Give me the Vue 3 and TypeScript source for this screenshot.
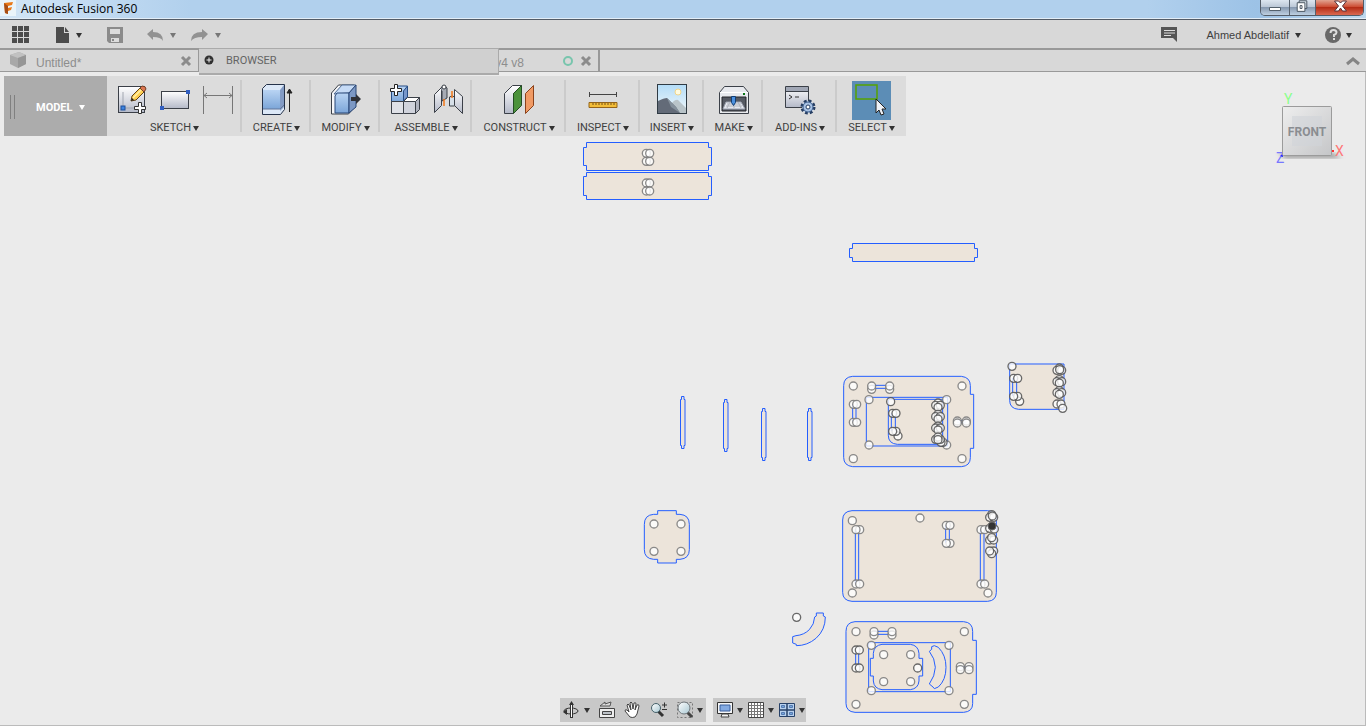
<script setup lang="ts">
type Point = [number, number]
interface Part { x: number; y: number; outline: string; lines?: string; holes: Point[]; dark?: Point[] }
interface Group { label: string; width: number; icons: string[]; active?: boolean }

const ink = '#3b4048'
const defs = `
<linearGradient id="metal" x1="0" y1="0" x2="0" y2="1"><stop offset="0" stop-color="#fff"/><stop offset="1" stop-color="#b4b9c8"/></linearGradient>
<linearGradient id="blue" x1="0" y1="0" x2="0" y2="1"><stop offset="0" stop-color="#b9d4f3"/><stop offset="1" stop-color="#7ba5d8"/></linearGradient>
<linearGradient id="sky" x1="0" y1="0" x2="0" y2="1"><stop offset="0" stop-color="#b3dcf7"/><stop offset="1" stop-color="#f2f8fa"/></linearGradient>
<linearGradient id="lens" x1="0" y1="0" x2="1" y2="1"><stop offset="0" stop-color="#fff"/><stop offset="1" stop-color="#a9c8d3"/></linearGradient>`

const icons: Record<string, string> = {
  sketch: `<rect x="2.5" y="2.5" width="26" height="26" fill="url(#metal)" stroke="${ink}"/><path d="M7 8v16h17" fill="none" stroke="#a1a6b0"/><rect x="5" y="22" width="4" height="4" fill="#3d84e0" stroke="#1d4f9c"/><path d="M15 17l1-5 8-8 4 4-8 8z" fill="#ffd052" stroke="#604018"/><path d="M17 14l8-8" stroke="#fff0a8" stroke-width="1.500"/><path d="M24 4l2-2q4 0 4 3l-2 3z" fill="#dc7650" stroke="#704028"/><path d="M15 17l3-1-2-2z" fill="#222"/><path d="M22.500 18.500h3v4h4v3h-4v4h-3v-4h-4v-3h4z" fill="#fff" stroke="#333"/>`,
  rectangle: `<rect x="2.500" y="7.500" width="27" height="17" fill="url(#metal)" stroke="${ink}"/><rect x="1" y="22" width="4" height="4" fill="#315fc2"/><rect x="27" y="6" width="4" height="4" fill="#315fc2"/>`,
  dimension: `<path d="M1.500 2v28M30.500 2v28M2 11.500h28M5 9l-3 2.500L5 14M27 9l3 2.500-3 2.500" fill="none" stroke="#777"/>`,
  extrude: `<path d="M1.500 4.500l4-4h18v25l-4 5h-18z" fill="#dce8f7" stroke="#26334a"/><path d="M2 6h17v19H2z" fill="url(#blue)"/><path d="M19 6l4-5v22l-4 4z" fill="#839bc4"/><path d="M2 25h17l4-4" fill="none" stroke="#64779a"/><path d="M28.500 28V6M26 9l2.500-4L31 9z" fill="#222" stroke="#222"/>`,
  modify: `<path d="M1.500 9l7-8h16v22l-6 7h-17z" fill="#f6f7fa" stroke="${ink}"/><path d="M4 10l8-9h14l-7 8z" fill="#c6dbf6" stroke="#4f6a91"/><path d="M7 9h12v20H5V12z" fill="url(#blue)" stroke="#294777"/><path d="M19 9l7-8v22l-7 6z" fill="#7c98c4" stroke="#294777"/><path d="M21 13h5v-3l5 5-5 5v-3h-5z" fill="#303238"/>`,
  component: `<path d="M2.500 7l5-5h11v11l-4 5h-12z" fill="url(#blue)" stroke="#264d85"/><path d="M14.500 7l4-5v11l-4 4z" fill="#7797cb" stroke="#264d85"/><path d="M2.500 17.500h12v12h-12z" fill="#dfe1e7" stroke="${ink}"/><path d="M14.500 17.500l4-4h12l-4 4z" fill="#fff" stroke="${ink}"/><path d="M14.500 17.500h12v12h-12z" fill="#d0d3dc" stroke="${ink}"/><path d="M26.500 17.500l4-4v12l-4 4z" fill="#afb3bf" stroke="${ink}"/><path d="M5.500 0.500h3v4h4v3h-4v4h-3v-4h-4v-3h4z" fill="#fff" stroke="#222"/>`,
  joint: `<path d="M2.500 10.500l7-7v18l-7 7z" fill="url(#metal)" stroke="${ink}"/><path d="M9 4q2-4 6 0v10l-5 3V7" fill="#a6abb4" stroke="${ink}"/><circle cx="12" cy="3" r="2" fill="#fff" stroke="${ink}"/><path d="M17.500 13q3-2 5 0v9h-5z" fill="#d6dfe8" stroke="${ink}"/><path d="M22.500 5.500l8 7v17l-8-8z" fill="url(#metal)" stroke="${ink}"/><path d="M20 7v7M12 15v7" stroke="#f47818" stroke-width="1.500"/>`,
  construct: `<path d="M1.500 9.500l8-8h9l-8 8v20h-9z" fill="url(#metal)" stroke="${ink}"/><path d="M10.500 9.500l8-8v20l-8 8z" fill="#4b923b" stroke="#244e23"/><path d="M22.500 9.500l8-8v20l-8 8z" fill="#f09a64" stroke="#8a421c"/>`,
  measure: `<path d="M2 10.500h28M2.500 8v5M29.500 8v5" stroke="#444"/><path d="M2 18.500h28v5H2z" fill="#f3bd38" stroke="#956419"/><path d="M6 19v2m3-2v2m3-2v2m3-2v2m3-2v2m3-2v2m3-2v2m3-2v2" stroke="#755017"/>`,
  insert: `<rect x="1.500" y="0.500" width="29" height="29" fill="url(#sky)" stroke="#303b44"/><path d="M14 21q5-6 8-5l8 8v5H14z" fill="#b9c4c9"/><path d="M2 17q6-3 9-3l9 9 4 6H2z" fill="#636b78"/><path d="M11 14l9 9 4 6-9-6z" fill="#84909b"/><circle cx="22" cy="8" r="3" fill="#fffbe0" stroke="#f1d58a"/>`,
  make: `<path d="M1.500 8.500l5-6h19l5 6v21h-29z" fill="#e8eaee" stroke="${ink}"/><path d="M2 8.500h28" stroke="#fff"/><path d="M4 13h24v14H4z" fill="#555962" stroke="#25272b"/><path d="M8 18h15l4 7H5z" fill="#e5e8ef" stroke="#999fac"/><path d="M9 20h14M8 22h16M12 18l-3 6m7-6v6m4-6l3 6" stroke="#afb3bc"/><path d="M13.500 12.500h4v6l-2 3-2-3z" fill="#4a90df" stroke="#123e75"/><path d="M25 9h2v2h-2z" fill="#087516"/>`,
  addins: `<path d="M1.500 2.500h23v21h-23z" fill="url(#metal)" stroke="${ink}"/><path d="M2 3h22v4H2z" fill="#a1a7b5"/><path d="M2 7.500h22" stroke="${ink}"/><path d="M5 11l3 2-3 2m6-2h4" fill="none" stroke="#333"/><circle cx="24" cy="23" r="6" fill="#c4d6ef" stroke="#263e63" stroke-width="3" stroke-dasharray="2.700 2"/><circle cx="24" cy="23" r="5" fill="#a9c3e5" stroke="#3c5d8b"/><circle cx="24" cy="23" r="2" fill="#fff" stroke="#263e63"/>`,
  select: `<rect x="1" y="1" width="21" height="14" fill="none" stroke="#56a300" stroke-width="1.500"/><path d="M21 15v14l3-3 2 5 3-1-2-5h4z" fill="#eef1f6" stroke="#222"/>`
}

const groups: Group[] = [
  { label: 'SKETCH', width: 135, icons: ['sketch', 'rectangle', 'dimension'] },
  { label: 'CREATE', width: 69, icons: ['extrude'] },
  { label: 'MODIFY', width: 69, icons: ['modify'] },
  { label: 'ASSEMBLE', width: 92, icons: ['component', 'joint'] },
  { label: 'CONSTRUCT', width: 94, icons: ['construct'] },
  { label: 'INSPECT', width: 74, icons: ['measure'] },
  { label: 'INSERT', width: 64, icons: ['insert'] },
  { label: 'MAKE', width: 59, icons: ['make'] },
  { label: 'ADD-INS', width: 74, icons: ['addins'] },
  { label: 'SELECT', width: 69, icons: ['select'], active: true }
]

const navSets = [
  [
    { name: 'Orbit', menu: true, art: `<ellipse cx="8" cy="10" rx="7" ry="3" fill="none" stroke="#333"/><path d="M8.500 2v15" stroke="#333" stroke-width="3"/><path d="M8.500 3v13" stroke="#fff"/><path d="M6 4l2.500-4L11 4zM4 8v6l-4-3z" fill="#333"/>` },
    { name: 'Look at', menu: false, art: `<path d="M1.500 7.500h15v9h-15z" fill="#eee" stroke="#444"/><path d="M4.500 10.500h9v3h-9z" fill="#bcc1c7" stroke="#444"/><path d="M2 5l5-4v2l6-2-1 4z" fill="#ddd" stroke="#555"/>` },
    { name: 'Pan', menu: false, art: `<path d="M6 16L1 10q0-2 2-1l2 2-2-7q1-2 2 0l2 5-1-7q1-2 2 0l1 6 1-6q2-1 2 1l-1 6 2-5q2-1 2 1l-2 8-2 3q-3 1-5 0z" fill="#fff" stroke="#444"/>` },
    { name: 'Zoom', menu: false, art: `<path d="M8 10l5 5" stroke="#333" stroke-width="3"/><circle cx="6" cy="7" r="4.500" fill="url(#lens)" stroke="#46616a"/><path d="M12 4h5m-2.500-2.500v5M12 8.500h5" stroke="#333"/>` },
    { name: 'Fit', menu: true, art: `<path d="M1.500 1.500h15v15h-15z" fill="none" stroke="#777" stroke-dasharray="2 2"/><path d="M11 11l5 5" stroke="#444" stroke-width="3"/><circle cx="8" cy="7" r="6" fill="url(#lens)" stroke="#70777c"/>` }
  ],
  [
    { name: 'Display settings', menu: true, art: `<path d="M1.500 1.500h15v11h-15z" fill="#f4f5f6" stroke="#333"/><path d="M4 4h10v6H4z" fill="#83aae2" stroke="#395f9e"/><path d="M6 13h6l1 3H5z" fill="#eee" stroke="#444"/>` },
    { name: 'Grid and snaps', menu: true, art: `<path d="M1.500 1.500h15v15h-15z" fill="#fff" stroke="#444"/><path d="M4.500 2v14m3-14v14m3-14v14m3-14v14M2 4.500h14m-14 3h14m-14 3h14m-14 3h14" stroke="#777"/>` },
    { name: 'Viewports', menu: true, art: `<path d="M1.500 2.500h15v13h-15z" fill="#b8d1ee" stroke="#274168"/><path d="M9 2v14M1 9h15" stroke="#274168" stroke-width="1.500"/><path d="M3.500 4.500h3v2h-3zm8 0h3v2h-3zm-8 7h3v2h-3zm8 0h3v2h-3z" fill="#78a5dc" stroke="#547bb0"/>` }
  ]
]

const simpleParts = [
  'M586.500 142.500H708.500V147.500H711.500V165.500H708.500V170.500H586.500V165.500H583.500V147.500H586.500Z',
  'M586.500 172.500H708.500V176.500H711.500V195.500H708.500V199.500H586.500V195.500H583.500V176.500H586.500Z',
  'M852.500 243.500H974.500V248.500H977.500V257.500H974.500V261.500H852.500V257.500H849.500V248.500H852.500Z',
  ...[[680, 396], [723, 399], [761, 408], [807, 408]].map(([x, y]) => `M${x + 1.5} ${y + .5}h2.500v3h1v46h-1v3h-2.500v-3h-1v-46h1z`)
]

// Outline and hole coordinates are in thirds of a canvas pixel, relative to each part's origin.
const parts: Part[] = [
  { x: 630, y: 70, outline: '', holes: [[48, 249], [58, 249], [48, 273], [58, 273], [48, 338], [58, 338], [48, 362], [58, 362]] },
  { x: 630, y: 385, outline: 'M83 388V377H139V388H150Q178 390 178 418V494Q178 521 150 523H139V534H83V523H71Q43 521 43 494V418Q43 390 71 388Z', holes: [[71, 416], [152, 416], [71, 498], [152, 498]] },
  {
    x: 830, y: 360, outline: 'M68 49H394Q421 52 421 77V103H431V265H421V293Q421 318 394 320H68Q41 317 41 292V77Q41 51 68 49Z',
    lines: 'M109 112H353V258H109ZM175 118H338V253H202Q175 251 175 226ZM124 76H178M124 85H178M68 132V186M78 132V186M184 159V213M196 159V213M381 182H408M381 188H408',
    holes: [[69, 77], [395, 77], [69, 295], [395, 295], [124, 87], [178, 87], [124, 77], [178, 77], [69, 132], [79, 132], [69, 186], [79, 186], [116, 118], [349, 118], [116, 254], [349, 254], [381, 182], [408, 182], [381, 188], [408, 188]],
    dark: [[181, 124], [187, 159], [197, 159], [203, 227], [197, 213], [187, 213], [323, 128], [316, 135], [330, 135], [323, 141], [323, 162], [316, 169], [330, 169], [323, 176], [323, 197], [316, 203], [330, 203], [323, 209], [338, 246], [332, 246], [316, 237], [330, 237], [323, 230], [323, 238]]
  },
  {
    x: 990, y: 350, outline: 'M59 42H222V178H86Q59 176 59 151Z', lines: 'M68 84V138M80 84V138', holes: [],
    dark: [[65, 48], [70, 84], [82, 84], [88, 153], [82, 138], [70, 138], [207, 53], [200, 60], [214, 60], [208, 58], [207, 88], [200, 94], [214, 94], [207, 98], [207, 121], [200, 127], [214, 127], [207, 132], [200, 161], [212, 161], [217, 174]]
  },
  {
    x: 830, y: 500, outline: 'M66 32H473Q499 34 499 60V277Q499 302 473 304H66Q38 302 38 277V60Q38 34 66 32Z',
    lines: 'M76 88V251M86 88V251M347 75V129M358 75V129M451 88V251M462 88V251',
    holes: [[66, 61], [66, 278], [473, 278], [269, 53], [88, 88], [77, 88], [77, 251], [88, 251], [348, 75], [359, 75], [359, 129], [348, 129], [452, 88], [463, 88], [452, 251], [463, 251]],
    dark: [[484, 43], [478, 51], [490, 51], [486, 47], [478, 84], [492, 86], [478, 119], [490, 119], [484, 112], [490, 152], [484, 160], [478, 152]]
  },
  {
    x: 780, y: 605, outline: 'M225 50H551Q578 52 578 79V106H589V268H578V296Q578 320 551 322H225Q198 320 198 295V79Q198 52 225 50ZM109 24H130V33L136 36Q136 75 108 100Q82 122 49 122V118L38 114V95L48 92Q72 90 88 74Q103 58 104 36L109 33Z',
    lines: 'M266 113H511V260H266ZM306 118H391Q415 121 417 145V160H428V213H417V228Q415 251 391 254H306Q282 251 280 228V213H271V160H280V145Q282 121 306 118ZM463 122L475 127Q498 150 498 187Q498 225 475 246L463 251L459 246L448 237Q465 213 466 187Q465 160 448 139L455 133V125ZM281 79H335M281 88H335M227 134V188M236 134V188M540 185H566M540 190H566',
    holes: [[227, 79], [552, 79], [227, 297], [552, 297], [281, 89], [335, 89], [281, 79], [335, 79], [273, 120], [506, 120], [273, 256], [506, 256], [310, 148], [391, 148], [310, 229], [391, 229], [540, 184], [566, 184], [540, 193], [566, 193]],
    dark: [[49, 36], [227, 134], [237, 134], [227, 188], [237, 188], [412, 188]]
  }
]
</script>

<template>
  <div class="app">
    <svg class="defs" aria-hidden="true"><defs v-html="defs" /></svg>
    <header class="titlebar">
      <svg class="logo" viewBox="0 0 16 16" aria-hidden="true"><path d="M0 0h16v16H0z" fill="#eaf4fa" /><path d="M4 3l9-1-1 3-4 1v2l4-1-1 3-3 1v3l-3-1z" fill="#e97918" /><path d="M4 3l4 3v8l-3-1z" fill="#a84e16" /></svg>
      <span class="title">Autodesk Fusion 360</span>
      <div class="window-buttons">
        <button class="minimize" aria-label="Minimize"><svg viewBox="0 0 28 16"><path d="M8.500 7.500h11v3h-11z" fill="#fff" stroke="#53606c" /></svg></button>
        <button class="restore" aria-label="Restore"><svg viewBox="0 0 26 16"><path d="M9.500.500h8v8h-8z" fill="#dbe5ee" stroke="#46515e" /><path d="M7.500 2.500h8v9h-8zM10.500 5.500h2v3h-2z" fill="#fff" stroke="#46515e" /></svg></button>
        <button class="close" aria-label="Close"><svg viewBox="0 0 46 16"><path d="M18 1h4l2 2 2-2h4l-4 5 4 5h-4l-2-3-2 3h-4l4-5z" fill="#fff" stroke="#58323a" /></svg></button>
      </div>
    </header>
    <div class="quickbar">
      <button class="quick apps" aria-label="Data panel"><svg width="18" height="18"><path d="M0 0h5v5H0zm6 0h5v5H6zm6 0h5v5h-5zM0 6h5v5H0zm6 0h5v5H6zm6 0h5v5h-5zM0 12h5v5H0zm6 0h5v5H6zm6 0h5v5h-5z" fill="#4c4c4c" /></svg></button>
      <button class="quick file" aria-label="File"><svg width="14" height="18"><path d="M0 1h8v6h5v10H0zm9 0l4 5H9z" fill="#4c4c4c" /></svg><i class="arrow" /></button>
      <button class="quick save" aria-label="Save"><svg width="17" height="17"><path d="M0 0h16v16H2l-2-2z" fill="#8b8b8b" /><path d="M3 2h10v5H3zM4 11h8v4H4z" fill="#dcdcdc" /><path d="M5 12h2v2H5z" fill="#888" /></svg></button>
      <button class="quick undo" aria-label="Undo"><svg width="17" height="13"><path d="M0 5l6-5v3q10 0 10 9-2-4-10-4v3z" fill="#929292" /></svg><i class="arrow pale" /></button>
      <button class="quick redo" aria-label="Redo"><svg width="17" height="13"><path d="M17 5l-6-5v3Q0 3 0 12q3-4 11-4v3z" fill="#929292" /></svg><i class="arrow pale" /></button>
      <div class="account">
        <button aria-label="Comments"><svg width="17" height="16"><path d="M0 0h16v15l-4-4H0z" fill="#555" /><path d="M3 3.500h11M3 6h11M3 8.500h7" stroke="#ddd" /></svg></button>
        <button class="user">Ahmed Abdellatif<i class="arrow" /></button>
        <button class="help" aria-label="Help"><svg width="17" height="17"><circle cx="8" cy="8" r="8" fill="#696969" /><path d="M5.500 6q0-3 3-3 3 0 3 2.500Q11.500 7 9 8v2" fill="none" stroke="#ddd" stroke-width="2" /><path d="M8 11h2v2H8z" fill="#ddd" /></svg><i class="arrow" /></button>
      </div>
    </div>
    <nav class="tabs" aria-label="Documents">
      <div class="tab first"><svg class="cube" width="17" height="17"><path d="M0 3l9-3 7 3v9l-8 4-8-4z" fill="#a8a8a8" /><path d="M0 3l9-3 7 3-8 3z" fill="#c1c1c1" /><path d="M8 6l8-3v9l-8 4z" fill="#969696" /></svg><a href="#">Untitled*</a><button class="tab-close" aria-label="Close Untitled"><svg width="12" height="12"><path d="M2 2l8 8M10 2l-8 8" stroke="#8c8c8c" stroke-width="3" /></svg></button></div>
      <div class="tab second"><a href="#">v4 v8</a><i class="status" /><button class="tab-close" aria-label="Close v8"><svg width="12" height="12"><path d="M2 2l8 8M10 2l-8 8" stroke="#8c8c8c" stroke-width="3" /></svg></button></div>
      <button class="collapse" aria-label="Collapse tabs"><svg width="14" height="10"><path d="M1 8l6-5 6 5" fill="none" stroke="#858585" stroke-width="3" /></svg></button>
      <button class="browser"><svg width="11" height="11"><circle cx="5" cy="5" r="4.500" fill="#303030" /><path d="M5 2.500v5M2.500 5h5" stroke="#eee" /></svg>BROWSER</button>
    </nav>
    <main class="workspace">
      <svg class="canvas" role="img" aria-label="Sketch profiles">
        <g transform="translate(0 -72)">
          <path v-for="path in simpleParts" :key="path" class="profile" :d="path" />
          <g v-for="(part, index) in parts" :key="index" :transform="`translate(${part.x} ${part.y}) scale(.333333)`">
            <path class="outline" :d="part.outline" /><path class="lines" :d="part.lines" />
            <circle v-for="(hole, n) in part.holes" :key="`h${n}`" class="hole" :cx="hole[0] + 1" :cy="hole[1] + 1" r="12" />
            <circle v-for="(hole, n) in part.dark" :key="`d${n}`" class="hole dark" :cx="hole[0] + 1" :cy="hole[1] + 1" r="12" />
          </g>
          <circle cx="992" cy="526" r="4" fill="#333" stroke="#666" />
        </g>
      </svg>
      <div class="ribbon" role="toolbar" aria-label="Modeling tools">
        <button class="model"><i class="grip" /><span>MODEL</span><i class="arrow light" /></button>
        <section v-for="group in groups" :key="group.label" class="group" :style="{ width: `${group.width}px` }">
          <div class="tools"><button v-for="icon in group.icons" :key="icon" class="tool" :class="{ active: group.active }" :aria-label="icon"><svg viewBox="0 0 32 32" v-html="icons[icon]" /></button></div>
          <button class="label">{{ group.label }}<i class="arrow" /></button>
        </section>
      </div>
      <svg class="viewcube" width="74" height="78" role="img" aria-label="Front view">
        <defs><linearGradient id="face" x1="0" y1="0" x2="1" y2="1"><stop stop-color="#eee" /><stop offset="1" stop-color="#c5c6c8" /></linearGradient><filter id="soft"><feGaussianBlur stdDeviation="2" /></filter></defs>
        <path d="M3 62h54l10 5H10z" fill="#999" filter="url(#soft)" />
        <text x="9" y="13" fill="#8cff8c">Y</text><text x="1" y="72" fill="#7777ff">Z</text><path d="M5 65l3-2v3z" fill="#22f" /><rect x="7.500" y="15.500" width="49" height="49" rx="1" fill="url(#face)" stroke="#9b9b9b" /><path d="M17 25h30v30H17z" fill="#d1d4d8" opacity=".6" /><text class="front" x="32" y="45" text-anchor="middle">FRONT</text><path d="M57 59h2v2h-2z" fill="#f33" /><text x="60" y="65" fill="#ff7777">X</text>
      </svg>
      <div class="navigation" role="toolbar" aria-label="Navigation">
        <div v-for="(set, i) in navSets" :key="i" class="nav-set"><button v-for="item in set" :key="item.name" class="nav-button" :class="{ menu: item.menu }" :aria-label="item.name"><svg width="18" height="18" v-html="item.art" /><i v-if="item.menu" class="arrow" /></button></div>
      </div>
    </main>
  </div>
</template>

<style>
html, body { margin: 0; background: #ebebeb; }
</style>
<style scoped>
* { box-sizing: border-box; }
.app { display: flex; flex-direction: column; min-height: 100vh; background: #ebebeb; color: #3f3f3f; font-family: Roboto, "Liberation Sans", sans-serif; font-size: 11px; overflow: hidden; }
button { border: 0; padding: 0; background: none; color: inherit; font: inherit; }
a { color: inherit; text-decoration: none; }
svg { display: block; flex: none; }
.defs { position: absolute; width: 0; height: 0; }
.titlebar { display: flex; height: 20px; flex: none; background: linear-gradient(90deg, #d2e5f6, #b1d0ed 14%, #b1d0ed 84%, #9cc2e6 92%, #bfd9ef); border-bottom: 1px solid #535b66; box-shadow: inset 0 -1px #e2edf7; }
.logo { width: 16px; height: 16px; }
.title { margin-left: 5px; color: #000; font: 12px/18px "Open Sans", sans-serif; }
.window-buttons { display: flex; height: 16px; margin-left: auto; margin-right: 2px; border: 1px solid #535c68; border-top: 0; border-radius: 0 0 5px 5px; overflow: hidden; }
.window-buttons button { height: 15px; background: linear-gradient(#dde6f0, #bcc8d7 45%, #8799b0 50%, #bed0e2); border-right: 1px solid #56616e; }
.window-buttons svg { height: 16px; width: 100%; }
.minimize { width: 29px; }
.restore { width: 26px; }
.window-buttons .close { width: 47px; border: 0; background: linear-gradient(#e1a491, #cd4d34 45%, #b52d16 50%, #da6952); }
.arrow { display: block; width: 0; height: 0; flex: none; border: 3px solid transparent; border-top: 5px solid #333; border-bottom: 0; }
.pale { border-top-color: #777; }
.light { border-top-color: #fff; }
.quickbar { display: flex; align-items: center; height: 30px; flex: none; padding-left: 12px; background: #d8d8d8; border-bottom: 2px solid #999; }
.quick { display: flex; align-items: center; height: 28px; padding-top: 2px; }
.file { margin-left: 26px; gap: 6px; }
.save { margin-left: 25px; }
.undo { margin-left: 23px; gap: 6px; }
.redo { margin-left: 15px; gap: 7px; }
.account { display: flex; align-items: center; height: 28px; margin-left: auto; padding: 2px 14px 0 0; font-family: "Liberation Sans", sans-serif; }
.user { display: flex; align-items: center; gap: 6px; margin-left: 28px; }
.help { display: flex; align-items: center; gap: 4px; margin-left: 24px; }
.tabs { position: relative; display: flex; height: 22px; flex: none; background: #d8d8d8; border-bottom: 1px solid #999; color: #8d8d8d; font: 12px/22px "Liberation Sans", sans-serif; }
.tab { display: flex; align-items: center; height: 21px; }
.first { width: 200px; padding: 0 6px 0 10px; border-right: 2px solid #999; }
.first a { margin-left: 9px; padding-top: 4px; }
.first .tab-close { margin-left: auto; }
.second { width: 400px; justify-content: flex-end; padding-right: 6px; border-right: 2px solid #999; }
.second a { padding-top: 4px; }
.status { width: 10px; height: 10px; margin: 0 7px 0 39px; border: 2px solid #78c5ad; border-radius: 50%; }
.collapse { margin-left: auto; margin-right: 6px; }
.browser { position: absolute; top: -2px; left: 199px; display: flex; align-items: center; gap: 11px; width: 300px; height: 27px; padding: 0 5px 1px; background: #d0d0d0; border: 1px solid #aaa; border-bottom: 2px solid #aaa; border-left: 0; color: #646464; font: 11px/20px Roboto, sans-serif; z-index: 2; }
.workspace { position: relative; flex: 1; min-height: 500px; padding: 4px; border-right: 1px solid #bbb; border-bottom: 1px solid #bbb; }
.canvas { position: absolute; inset: 0; width: 100%; height: 100%; }
.profile, .outline { fill: #ece4da; stroke: #245eff; stroke-width: 1; }
.outline { stroke-width: 3; }
.lines { fill: none; stroke: #245eff; stroke-width: 3; }
.hole { fill: #fff; fill-opacity: .8; stroke: #777; stroke-width: 4; stroke-opacity: .85; }
.dark { stroke: #505050; }
.ribbon { position: relative; display: flex; width: fit-content; height: 60px; background: #dcdcdc; }
.model { display: flex; align-items: center; width: 103px; padding: 2px 0 0 6px; background: #acacac; color: #fff; font-weight: 700; }
.grip { width: 5px; height: 24px; margin-right: 21px; border: solid #808080; border-width: 0 1px; }
.model .light { margin-left: 6px; }
.group { position: relative; display: flex; flex-direction: column; align-items: center; }
.group:not(:last-child)::after { position: absolute; right: 0; top: 4px; width: 2px; height: 52px; background: #cbcbcb; content: ""; }
.tools { display: flex; align-items: center; gap: 11px; height: 45px; padding-top: 3px; }
.tool { width: 32px; height: 32px; }
.tool svg { width: 32px; height: 32px; }
.active { width: 39px; height: 39px; padding: 3px; background: #5c8db6; }
.label { display: flex; align-items: center; gap: 2px; height: 14px; line-height: 14px; }
.viewcube { position: absolute; top: 19px; right: 16px; font: 14px Roboto, sans-serif; }
.front { fill: #8a8d91; font-size: 12px; font-weight: 700; }
.navigation { position: absolute; bottom: 3px; left: 0; right: 0; display: flex; justify-content: center; gap: 7px; }
.nav-set { display: flex; align-items: center; gap: 8px; height: 24px; padding: 0 3px; background: #c8c8c8; }
.nav-set:last-child { gap: 4px; padding-right: 1px; }
.nav-button { display: flex; align-items: center; gap: 3px; }
</style>
